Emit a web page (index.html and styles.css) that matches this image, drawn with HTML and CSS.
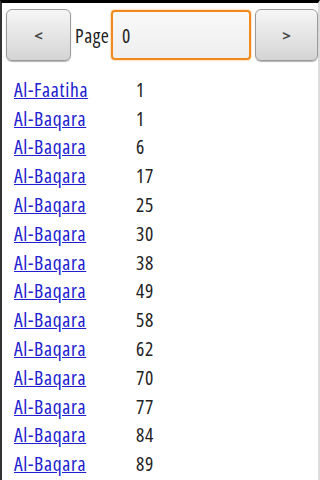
FILE: index.html
```html
<!DOCTYPE html>
<html lang="en">
<head>
    <meta charset="UTF-8">
    <meta name="viewport" content="width=device-width, initial-scale=1.0">
    <title>Index</title>
    <link rel="stylesheet" href="styles.css">
</head>
<body>
    <div class="screen">
        <!-- Pager -->
        <div class="pager">
            <button class="nav-btn">&lt;</button>
            <span class="page-label">Page</span>
            <input class="page-input" type="text" value="0">
            <button class="nav-btn nav-next">&gt;</button>
        </div>

        <!-- Sura list -->
        <div class="list">
            <a href="#">Al-Faatiha</a><span>1</span>
            <a href="#">Al-Baqara</a><span>1</span>
            <a href="#">Al-Baqara</a><span>6</span>
            <a href="#">Al-Baqara</a><span>17</span>
            <a href="#">Al-Baqara</a><span>25</span>
            <a href="#">Al-Baqara</a><span>30</span>
            <a href="#">Al-Baqara</a><span>38</span>
            <a href="#">Al-Baqara</a><span>49</span>
            <a href="#">Al-Baqara</a><span>58</span>
            <a href="#">Al-Baqara</a><span>62</span>
            <a href="#">Al-Baqara</a><span>70</span>
            <a href="#">Al-Baqara</a><span>77</span>
            <a href="#">Al-Baqara</a><span>84</span>
            <a href="#">Al-Baqara</a><span>89</span>
        </div>
    </div>
</body>
</html>
```

FILE: styles.css
```css
html, body {
    margin: 0;
    padding: 0;
    height: 100%;
    overflow: hidden;
}
body {
    font-family: "Open Sans", sans-serif;
    font-stretch: 75%;
    background-color: #ffffff;
}
.screen {
    height: 100%;
    box-sizing: border-box;
    border-top: 3px solid #000;
    border-left: 2px solid #333;
    border-right: 2px solid #ddd;
    background: #fff;
}
.pager {
    display: flex;
    align-items: center;
    padding: 5px 0 0 4px;
    height: 59px;
    box-sizing: border-box;
}
.nav-btn {
    width: 65px;
    height: 52px;
    border: 1px solid #9a9a9a;
    border-radius: 6px;
    background: linear-gradient(#f6f6f6, #d4d4d4);
    box-shadow: 0 1px 1px rgba(0, 0, 0, 0.3);
    color: #444;
    font-family: "Open Sans", sans-serif;
    font-size: 15px;
    font-weight: bold;
    padding: 0;
}
.nav-next {
    width: 63px;
    margin-left: 4px;
}
.page-label {
    width: 36px;
    font-size: 19.5px;
    letter-spacing: 0.6px;
    color: #222;
    margin-left: 4px;
}
.page-input {
    width: 140px;
    height: 50px;
    box-sizing: border-box;
    border: 2px solid #f08a1c;
    border-radius: 4px;
    background: linear-gradient(#f9f9f9, #eeeeee);
    box-shadow: 0 0 2px #f5a040;
    font-family: "Open Sans", sans-serif;
    font-stretch: 75%;
    font-size: 19.5px;
    color: #222;
    padding: 0 9px;
    outline: none;
}
.list {
    display: grid;
    grid-template-columns: 122px auto;
    grid-auto-rows: 28.8px;
    align-items: center;
    padding: 13px 0 0 12px;
    font-size: 19.5px;
    letter-spacing: 0.7px;
}
.list a {
    color: #2020d0;
}
.list span {
    color: #222;
}
```
